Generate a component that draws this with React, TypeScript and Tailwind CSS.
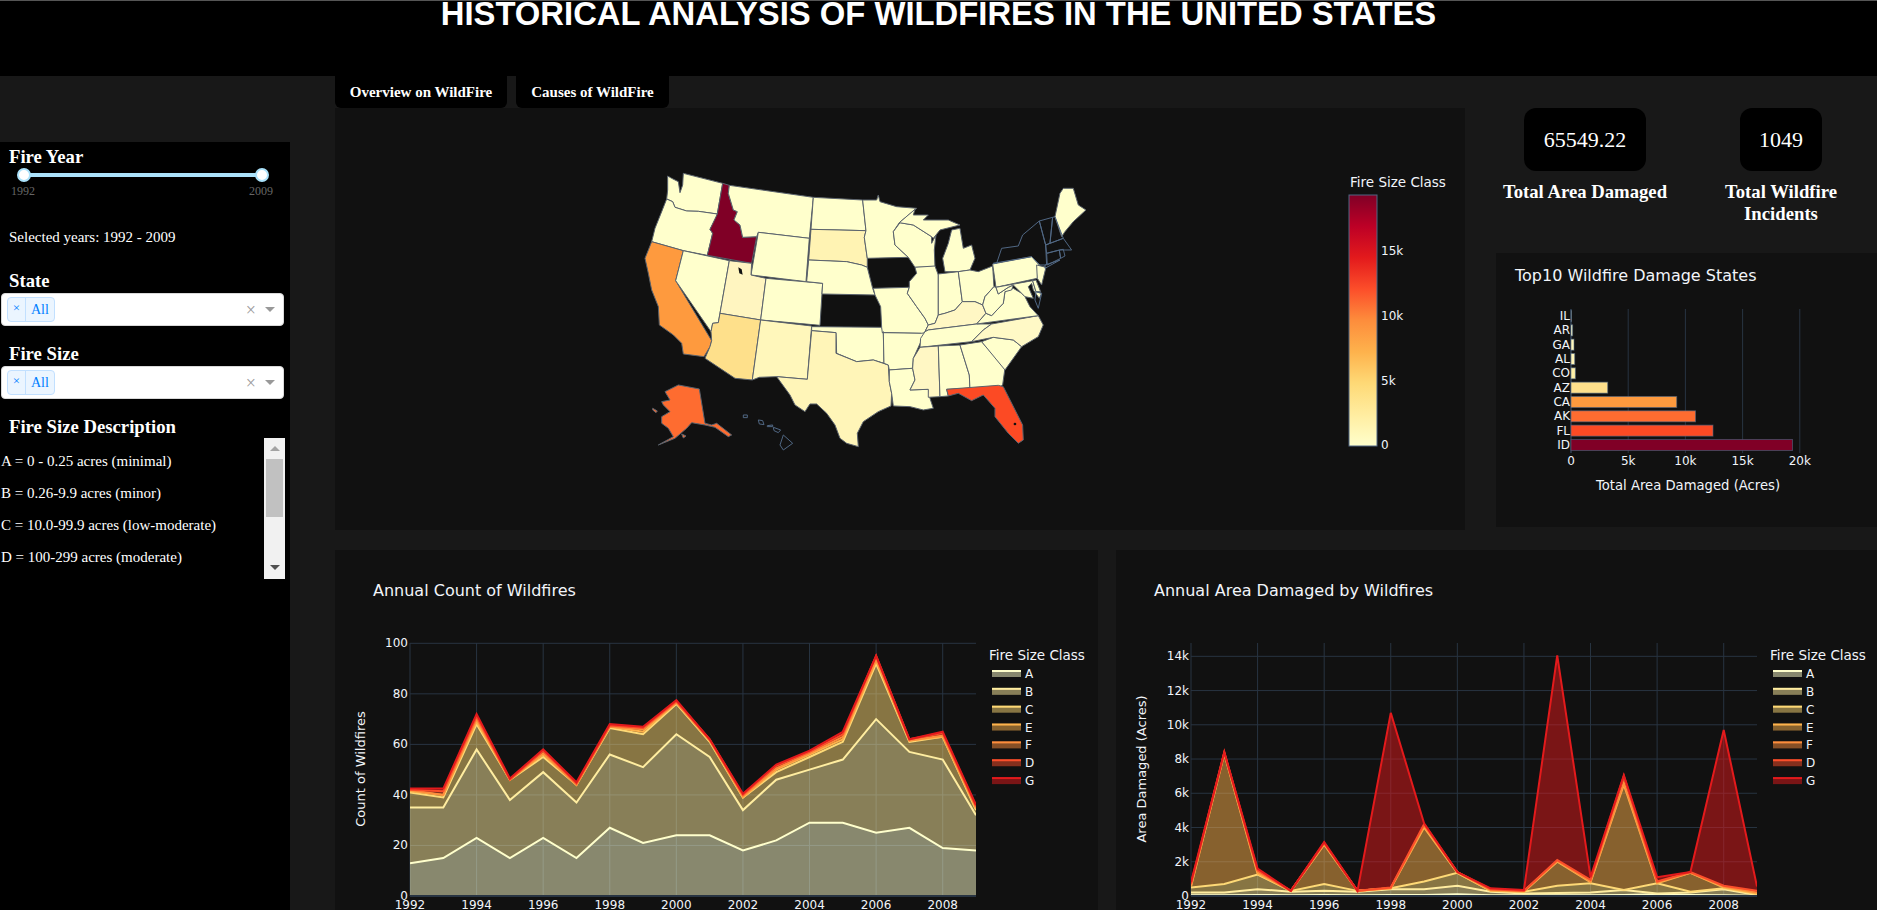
import React from "react";

const SERIES = [
  { name: "A", color: "#ffffcc" },
  { name: "B", color: "#ffeda0" },
  { name: "C", color: "#fed976" },
  { name: "E", color: "#feb24c" },
  { name: "F", color: "#fd8d3c" },
  { name: "D", color: "#fc4e2a" },
  { name: "G", color: "#e31a1c" },
];

// stacked totals per class, 1992 - 2009
const COUNT_STACK = [
  [13, 15, 23, 15, 23, 15, 27, 21, 24, 24, 18, 22, 29, 29, 25, 27, 19, 18],
  [35, 35, 58, 38, 49, 37, 56, 51, 64, 55, 34, 46, 50, 54, 70, 57, 54, 32],
  [41, 39, 68, 46, 55, 44, 66.5, 64, 76, 61, 39, 49, 55, 61, 92, 61, 63, 34],
  [41.5, 40, 69, 46, 56, 44, 67, 65, 76.5, 61.5, 39, 50, 56, 62, 93, 61.5, 63, 34.5],
  [42, 40, 70, 46, 56.5, 44, 67, 66, 76.5, 61.5, 39.5, 50.5, 56.5, 63, 93.5, 61.5, 63.5, 35],
  [42, 41.5, 71, 46, 57.5, 44.5, 67.5, 66.5, 77, 62, 40, 51.5, 57, 64, 95, 62, 64.5, 35.5],
  [42.5, 42.5, 72, 46.5, 58, 45, 68, 67, 77.5, 62, 40.5, 52, 57.5, 65, 95, 62, 65, 36],
];

const AREA_STACK = [
  [50, 50, 60, 50, 60, 50, 60, 60, 100, 50, 50, 50, 50, 60, 100, 60, 50, 20],
  [200, 200, 400, 250, 300, 250, 400, 400, 600, 250, 150, 180, 200, 350, 150, 200, 400, 60],
  [500, 700, 1250, 300, 700, 300, 450, 850, 1350, 300, 250, 600, 750, 350, 750, 250, 450, 100],
  [550, 8300, 1300, 300, 3000, 300, 450, 4000, 1350, 300, 250, 2000, 800, 6500, 750, 1350, 500, 150],
  [600, 8350, 1400, 300, 3050, 300, 450, 4100, 1400, 350, 300, 2050, 850, 6600, 800, 1350, 550, 200],
  [700, 8400, 1500, 300, 3100, 300, 500, 4200, 1400, 400, 300, 2100, 950, 7000, 850, 1400, 600, 300],
  [800, 8400, 1600, 300, 3150, 300, 10700, 4250, 1400, 450, 350, 14050, 1100, 7050, 1100, 1400, 9700, 550],
];

const STATES = [
  { d: "113,78 125,85 145,95 150,128 158,105 160,70 278,100 262,192 205,184 170,183 135,172 128,155 110,147 113,120", f: "#ffffcc" },
  { d: "110,147 128,155 135,172 170,183 205,184 262,192 258,205 240,238 248,250 232,316 160,302 65,275 75,235 95,185", f: "#ffffcc" },
  { d: "65,275 160,302 137,392 245,572 240,590 222,620 160,612 155,580 130,555 88,525 85,470 65,420 55,370 45,325", f: "#fe9a3e" },
  { d: "160,302 298,332 265,518 248,520 243,545 137,392", f: "#ffffcc" },
  { d: "278,100 298,106 295,130 310,180 322,185 312,210 330,225 338,262 380,260 365,340 232,316 248,250 240,238 262,192", f: "#800026" },
  { d: "298,106 550,142 538,265 385,247 380,260 338,262 330,225 312,210 322,185 310,180 295,130", f: "#ffffcc" },
  { d: "385,247 538,265 528,395 363,375", f: "#ffffcc" },
  { d: "298,332 365,340 363,375 408,385 392,510 270,490", f: "#fff5c0" },
  { d: "270,490 392,510 367,690 315,685 225,625 240,590 245,572 243,545 248,520 265,518", f: "#fee08b" },
  { d: "408,385 578,400 570,526 392,510", f: "#ffffcc" },
  { d: "392,510 545,528 532,688 440,680 388,682 367,690", f: "#fff7bb" },
  { d: "550,142 698,150 708,242 543,238", f: "#ffffcc" },
  { d: "543,238 708,242 703,262 712,325 712,352 695,345 650,335 536,330", f: "#fff3b3" },
  { d: "536,330 650,335 695,345 712,352 728,415 735,435 576,432 578,400 530,395", f: "#ffffcc" },
  { d: "545,530 755,532 760,545 762,640 730,630 680,635 620,610 618,548 545,542", f: "#ffffcc" },
  { d: "545,542 618,548 618,610 680,635 730,630 775,645 778,695 785,730 783,768 745,785 700,815 682,850 685,890 650,880 630,865 615,825 590,790 560,762 540,762 525,785 495,765 480,735 440,680 532,688", f: "#fff5b8" },
  { d: "698,150 740,150 745,135 750,155 800,170 860,175 808,218 790,245 795,285 835,322 712,325 703,262 708,242", f: "#ffffcc" },
  { d: "730,415 838,412 832,430 860,470 885,505 895,525 885,545 872,565 875,550 757,548 755,532 752,470 735,435", f: "#ffffcc" },
  { d: "757,548 875,550 885,548 850,625 848,655 778,660 775,645 762,640 760,545", f: "#ffffcc" },
  { d: "778,660 848,655 855,690 840,720 895,718 900,745 910,775 880,780 840,770 790,768 785,730 778,695", f: "#ffffcc" },
  { d: "790,245 810,218 850,225 905,260 905,280 918,255 913,300 915,350 855,352 835,322 795,285", f: "#ffffcc" },
  { d: "855,352 915,348 925,375 925,495 915,520 895,525 885,505 860,470 832,430 838,412 838,395 860,370", f: "#ffffcc" },
  { d: "945,365 938,325 955,280 965,240 990,235 1000,295 1025,285 1035,325 1020,360 985,365", f: "#ffffcc" },
  { d: "808,218 855,178 850,195 895,195 880,210 955,210 990,225 930,240 910,265 905,260 850,225", f: "#ffffcc" },
  { d: "925,372 985,365 997,455 975,480 945,490 925,495", f: "#ffffcc" },
  { d: "985,365 1020,360 1045,365 1088,348 1092,410 1065,440 1058,465 1035,455 997,455", f: "#ffffcc" },
  { d: "925,495 945,490 975,480 997,455 1035,455 1058,465 1068,490 1040,522 895,540 885,545 895,525 915,520", f: "#fff7c4" },
  { d: "885,545 895,540 1040,522 1085,522 1060,540 1025,575 870,592 872,565", f: "#ffffcc" },
  { d: "870,592 925,588 930,740 895,742 895,718 840,720 855,690 848,655 850,625", f: "#fff7c4" },
  { d: "925,588 990,585 1018,675 1020,715 950,718 955,738 930,740", f: "#ffffcc" },
  { d: "990,585 1055,575 1125,655 1118,705 1105,715 1020,717 1018,675", f: "#ffffcc" },
  { d: "950,718 1105,706 1120,710 1178,825 1180,870 1165,880 1135,850 1095,800 1095,775 1060,735 1025,752 985,730 955,738", f: "#fc4a24" },
  { d: "1055,575 1090,562 1150,570 1175,590 1125,660", f: "#ffffcc" },
  { d: "1025,575 1060,540 1085,522 1225,497 1240,525 1225,560 1175,590 1150,570 1090,562", f: "#fff9c6" },
  { d: "1040,522 1068,490 1085,497 1120,460 1125,425 1150,415 1175,430 1185,440 1200,470 1225,497", f: "#ffffcc" },
  { d: "1058,465 1065,440 1092,410 1098,412 1105,432 1135,412 1150,405 1145,420 1125,425 1120,460 1085,497 1068,490", f: "#ffffcc" },
  { d: "1088,342 1205,320 1228,345 1222,385 1098,412", f: "#ffffcc" },
  { d: "1220,345 1248,352 1235,405 1222,385", f: "#ffffcc" },
  { d: "1098,412 1208,392 1218,425 1235,430 1228,445 1210,420 1205,400 1195,410 1210,445 1185,440 1175,430 1150,405 1135,412 1105,432", f: "#ffffcc" },
  { d: "1208,392 1218,390 1232,425 1218,425", f: "#ffffcc" },
  { d: "1275,200 1290,130 1300,115 1330,115 1345,165 1368,180 1330,215 1305,245 1295,260", f: "#ffffcc" },
  { d: "105,725 145,705 208,717 225,820 245,825 260,820 305,855 295,860 255,832 225,825 195,820 185,818 170,835 135,865 85,885 130,860 115,835 95,820 95,800 120,785 100,765 95,755 120,750", f: "#fe6c30" },
  { d: "68,775 82,783 78,788 68,780", f: "#fe6c30" },
  { d: "155,852 168,858 160,864", f: "#fe6c30" },
];

// states without data, outline only
const EMPTY_STATES = [
  "1100,340 1115,295 1165,288 1178,255 1228,213 1247,285 1250,345 1230,345 1205,320 1090,340",
  "1228,213 1268,202 1260,280 1247,285",
  "1268,202 1275,200 1300,265 1260,280",
  "1247,285 1300,265 1325,300 1290,300 1250,310",
  "1250,310 1288,300 1292,325 1252,345",
  "1288,300 1300,298 1305,318 1292,325",
  "1245,355 1290,330 1245,345",
  "1218,425 1235,430 1225,475 1215,450",
  "340,795 352,795 352,803 340,803",
  "385,810 398,812 402,824 388,822",
  "412,827 428,825 428,830 412,830",
  "430,832 452,840 445,848 432,842",
  "460,855 488,880 460,900 450,885",
];

const ChartAxisTitle = ({ x, y, children }: { x: number; y: number; children: string }) => (
  <text x={x} y={y} transform={`rotate(-90 ${x} ${y})`} textAnchor="middle" className="text-[13px]">
    {children}
  </text>
);

type AreaChartProps = {
  title: string;
  yTitle: string;
  stack: number[][];
  yTicks: { v: number; label: string }[];
  yMax: number;
  plotX: number;
  titleX: number;
  yTitleX: number;
  legendX: number;
  width: number;
};

// plot is always 566 wide, baseline at y=346 inside the panel
const AreaChart = ({ title, yTitle, stack, yTicks, yMax, plotX, titleX, yTitleX, legendX, width }: AreaChartProps) => {
  const baseY = 346;
  const perUnit = yMax;
  const px = (i: number) => plotX + i * (566 / 17);
  const py = (v: number) => baseY - v * perUnit;
  const line = (vals: number[]) => vals.map((v, i) => `${px(i)},${py(v)}`).join(" ");
  const years = [1992, 1994, 1996, 1998, 2000, 2002, 2004, 2006, 2008];
  const clipId = `clip-${plotX}-${width}`;

  return (
    <svg width={width} height={360} className="block fill-[#f2f5fa] font-['DejaVu_Sans',sans-serif]">
      <defs>
        <clipPath id={clipId}>
          <rect x={plotX} y={93} width={566} height={254} />
        </clipPath>
      </defs>
      <text x={titleX} y={46} className="text-[16px]">{title}</text>
      {years.map((yr, i) => (
        <g key={yr}>
          <line x1={px(i * 2)} x2={px(i * 2)} y1={93} y2={baseY} stroke="#283442" />
          <text x={px(i * 2)} y={359} textAnchor="middle" className="text-[12px]">{yr}</text>
        </g>
      ))}
      {yTicks.map((t) => (
        <g key={t.label}>
          <line x1={plotX} x2={plotX + 566} y1={py(t.v)} y2={py(t.v)} stroke="#283442" />
          <text x={plotX - 2} y={py(t.v) + 4} textAnchor="end" className="text-[12px]">{t.label}</text>
        </g>
      ))}
      <g clipPath={`url(#${clipId})`}>
        {stack.map((vals, s) => {
          const lower = s === 0 ? vals.map(() => 0) : stack[s - 1];
          const back = lower.map((v, i) => `${px(i)},${py(v)}`).reverse().join(" ");
          return <polygon key={s} points={`${line(vals)} ${back}`} fill={SERIES[s].color} fillOpacity={0.5} />;
        })}
        {stack.map((vals, s) => (
          <polyline key={s} points={line(vals)} fill="none" stroke={SERIES[s].color} strokeWidth={2} />
        ))}
      </g>
      <line x1={plotX} x2={plotX + 566} y1={baseY} y2={baseY} stroke="#283442" strokeWidth={2} />
      <ChartAxisTitle x={yTitleX} y={219}>{yTitle}</ChartAxisTitle>
      <text x={legendX} y={110} className="text-[13.5px]">Fire Size Class</text>
      {SERIES.map((s, i) => {
        const y = 124 + i * 17.85;
        return (
          <g key={s.name}>
            <rect x={legendX + 3} y={y - 4} width={29} height={7} fill={s.color} fillOpacity={0.5} />
            <line x1={legendX + 3} x2={legendX + 32} y1={y - 3} y2={y - 3} stroke={s.color} strokeWidth={2} />
            <text x={legendX + 36} y={y + 4} className="text-[12px]">{s.name}</text>
          </g>
        );
      })}
    </svg>
  );
};

const StateMap = () => (
  <svg width={1130} height={422} className="block fill-[#f2f5fa] font-['DejaVu_Sans',sans-serif]">
    <defs>
      <linearGradient id="ylorrd" x1="0" y1="1" x2="0" y2="0">
        <stop offset="0" stopColor="#ffffcc" />
        <stop offset="0.125" stopColor="#ffeda0" />
        <stop offset="0.25" stopColor="#fed976" />
        <stop offset="0.375" stopColor="#feb24c" />
        <stop offset="0.5" stopColor="#fd8d3c" />
        <stop offset="0.625" stopColor="#fc4e2a" />
        <stop offset="0.75" stopColor="#e31a1c" />
        <stop offset="0.875" stopColor="#bd0026" />
        <stop offset="1" stopColor="#800026" />
      </linearGradient>
    </defs>
    <g transform="translate(295 42) scale(0.3333)">
      {STATES.map((s) => (
        <polygon key={s.d} points={s.d} fill={s.f} stroke="#5a626c" strokeWidth={3} strokeLinejoin="round" />
      ))}
      {EMPTY_STATES.map((d) => (
        <polygon key={d} points={d} fill="none" stroke="#506784" strokeWidth={3} strokeLinejoin="round" />
      ))}
      <polygon points="325,352 335,358 338,374 328,370" fill="#111111" />
      <circle cx={1155} cy={822} r={4} fill="#111111" />
    </g>
    <text x={1015} y={79} className="text-[13.5px]">Fire Size Class</text>
    <rect x={1014} y={87} width={28} height={251} fill="url(#ylorrd)" stroke="#506784" />
    {[
      { y: 143, label: "15k" },
      { y: 208, label: "10k" },
      { y: 273, label: "5k" },
      { y: 337, label: "0" },
    ].map((t) => (
      <text key={t.label} x={1046} y={t.y + 4} className="text-[12px]">{t.label}</text>
    ))}
  </svg>
);

const BARS = [
  { s: "IL", w: 0.3, c: "#ffffcc" },
  { s: "AR", w: 1.6, c: "#ffffcc" },
  { s: "GA", w: 3, c: "#fff7bb" },
  { s: "AL", w: 3.7, c: "#fff5b8" },
  { s: "CO", w: 4.4, c: "#fff1a8" },
  { s: "AZ", w: 36.7, c: "#fee08b" },
  { s: "CA", w: 105.7, c: "#fe9a3e" },
  { s: "AK", w: 124.5, c: "#fe6c30" },
  { s: "FL", w: 142, c: "#fc4a24" },
  { s: "ID", w: 221.5, c: "#800026" },
];

const TopStates = () => {
  const x0 = 75;
  return (
    <svg width={381} height={274} className="block fill-[#f2f5fa] font-['DejaVu_Sans',sans-serif]">
      <text x={19} y={28} className="text-[16px]">Top10 Wildfire Damage States</text>
      {[0, 1, 2, 3, 4].map((i) => (
        <g key={i}>
          <line x1={x0 + i * 57.2} x2={x0 + i * 57.2} y1={56} y2={200} stroke="#283442" strokeWidth={i === 0 ? 2 : 1} />
          <text x={x0 + i * 57.2} y={212} textAnchor="middle" className="text-[12px]">
            {i === 0 ? "0" : `${i * 5}k`}
          </text>
        </g>
      ))}
      {BARS.map((b, i) => {
        const y = 63 + i * 14.33;
        return (
          <g key={b.s}>
            <rect x={x0} y={y - 5.5} width={b.w} height={11} fill={b.c} stroke="#506784" strokeOpacity={0.6} />
            <text x={x0 - 1} y={y + 4} textAnchor="end" className="text-[12px]">{b.s}</text>
          </g>
        );
      })}
      <text x={192} y={237} textAnchor="middle" className="text-[13.2px]">Total Area Damaged (Acres)</text>
    </svg>
  );
};

const SelectBox = () => (
  <div className="ml-px w-[283px] h-[33px] bg-white rounded border border-[#d9d9d9] flex items-center pl-[5px] pr-[8px]">
    <div className="h-[25px] flex items-center bg-[#ebf5ff] border border-[#c2e0ff] rounded-sm text-[#007eff] text-[14px]">
      <span className="w-[18px] h-full flex items-center justify-center border-r border-[#c2e0ff] text-[13px] pb-1">×</span>
      <span className="px-[5px]">All</span>
    </div>
    <span className="ml-auto text-[#999] text-[18px] leading-none">×</span>
    <span className="ml-[9px] w-0 h-0 border-x-[5px] border-x-transparent border-t-[5px] border-t-[#999]" />
  </div>
);

const DESCRIPTIONS = [
  "A = 0 - 0.25 acres (minimal)",
  "B = 0.26-9.9 acres (minor)",
  "C = 10.0-99.9 acres (low-moderate)",
  "D = 100-299 acres (moderate)",
];

const Sidebar = () => (
  <aside className="w-[290px] h-[768px] mt-[66px] shrink-0 bg-black text-white">
    <h3 className="pl-[9px] pt-[4px] text-[18.72px] font-bold leading-[22px]">Fire Year</h3>
    <div className="ml-[17px] mr-[21px] relative h-[14px] flex items-center">
      <div className="w-full h-[4px] mx-[6px] bg-[#abe2fb]" />
      <span className="absolute left-0 w-[14px] h-[14px] rounded-full bg-white border-2 border-[#abe2fb]" />
      <span className="absolute right-0 w-[14px] h-[14px] rounded-full bg-white border-2 border-[#abe2fb]" />
    </div>
    <div className="ml-[11px] mr-[17px] mt-[1px] flex justify-between text-[12px] leading-[16px] text-[#666]">
      <span>1992</span>
      <span>2009</span>
    </div>
    <p className="pl-[9px] mt-[28px] text-[15px] leading-[20px]">Selected years: 1992 - 2009</p>
    <h3 className="pl-[9px] mt-[23px] text-[18.72px] font-bold leading-[22px]">State</h3>
    <div className="mt-[1px]">
      <SelectBox />
    </div>
    <h3 className="pl-[9px] mt-[17px] text-[18.72px] font-bold leading-[22px]">Fire Size</h3>
    <div className="mt-[1px]">
      <SelectBox />
    </div>
    <h3 className="pl-[9px] mt-[17px] text-[18.72px] font-bold leading-[22px]">Fire Size Description</h3>
    <div className="h-[141px] flex">
      <div className="w-[264px] pl-px pt-[13px] text-[15px]">
        {DESCRIPTIONS.map((d) => (
          <p key={d} className="h-[32px] leading-[20px]">{d}</p>
        ))}
      </div>
      <div className="w-[21px] bg-[#f1f1f1] flex flex-col items-center">
        <span className="mt-[8px] w-0 h-0 border-x-[5px] border-x-transparent border-b-[5px] border-b-[#a3a3a3]" />
        <span className="mt-[8px] w-[17px] h-[58px] bg-[#c1c1c1]" />
        <span className="mt-auto mb-[9px] w-0 h-0 border-x-[5px] border-x-transparent border-t-[5px] border-t-[#505050]" />
      </div>
    </div>
  </aside>
);

const KpiCard = ({ value, label, w, cardW }: { value: string; label: string; w: string; cardW: string }) => (
  <div className={`flex flex-col items-center ${w}`}>
    <div className={`h-[63px] ${cardW} bg-black rounded-[12px] flex items-center justify-center text-[22px] text-white`}>
      {value}
    </div>
    <p className="mt-[10px] text-[18.72px] leading-[22px] font-bold text-center text-white">{label}</p>
  </div>
);

export default function App() {
  return (
    <div className="w-full h-[910px] overflow-hidden bg-[#181818] font-['Liberation_Serif',serif]">
      <header className="h-[76px] bg-black border-t border-[#555]">
        <h1 className="text-center text-[32.8px] leading-[26px] font-bold text-white font-['Liberation_Sans',sans-serif]">
          HISTORICAL ANALYSIS OF WILDFIRES IN THE UNITED STATES
        </h1>
      </header>
      <div className="flex">
        <Sidebar />
        <main className="ml-[45px] flex-1 min-w-0">
          <div className="h-[32px] flex gap-[9px]">
            <button className="w-[172px] bg-black rounded-b-md text-white text-[15px] font-bold">Overview on WildFire</button>
            <button className="w-[153px] bg-black rounded-b-md text-white text-[15px] font-bold">Causes of WildFire</button>
          </div>
          <div className="flex h-[422px]">
            <div className="w-[1130px] bg-[#111111]">
              <StateMap />
            </div>
            <div className="flex-1 min-w-0">
              <div className="h-[145px] flex pl-[30px]">
                <KpiCard value="65549.22" label="Total Area Damaged" w="w-[180px]" cardW="w-[122px]" />
                <KpiCard value="1049" label="Total Wildfire Incidents" w="w-[150px] ml-[31px]" cardW="w-[82px]" />
              </div>
              <div className="ml-[31px] bg-[#111111]">
                <TopStates />
              </div>
            </div>
          </div>
          <div className="mt-[20px] flex gap-[18px]">
            <div className="w-[763px] bg-[#111111]">
              <AreaChart
                title="Annual Count of Wildfires"
                yTitle="Count of Wildfires"
                stack={COUNT_STACK}
                yMax={2.527}
                yTicks={[0, 20, 40, 60, 80, 100].map((v) => ({ v, label: String(v) }))}
                plotX={75}
                titleX={38}
                yTitleX={30}
                legendX={654}
                width={763}
              />
            </div>
            <div className="flex-1 bg-[#111111]">
              <AreaChart
                title="Annual Area Damaged by Wildfires"
                yTitle="Area Damaged (Acres)"
                stack={AREA_STACK}
                yMax={0.01712}
                yTicks={[0, 2000, 4000, 6000, 8000, 10000, 12000, 14000].map((v) => ({ v, label: v === 0 ? "0" : `${v / 1000}k` }))}
                plotX={75}
                titleX={38}
                yTitleX={30}
                legendX={654}
                width={761}
              />
            </div>
          </div>
        </main>
      </div>
    </div>
  );
}
